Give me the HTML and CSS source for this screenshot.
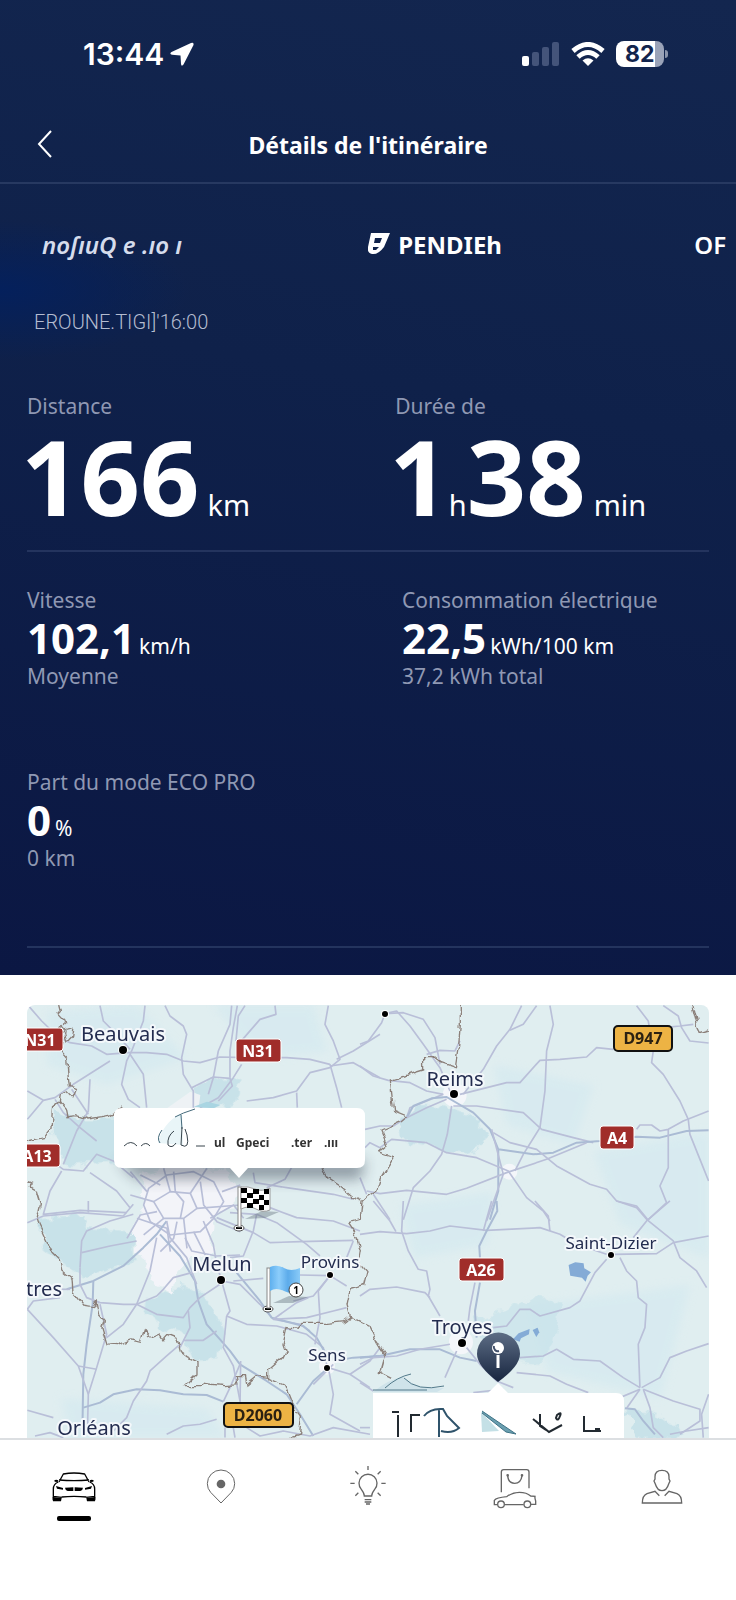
FILE: index.html
```
<!DOCTYPE html>
<html lang="fr">
<head>
  <meta charset="UTF-8">
  <meta name="viewport" content="width=device-width, initial-scale=1">
  <title>Détails de l'itinéraire</title>
  <link rel="stylesheet" href="styles.css">
</head>
<body>

<div class="trip">
  <div class="status">
    <div class="status-left">
      <span class="clock">13:44</span>
      <svg width="24" height="24" viewBox="0 0 24 24"><path d="M21 1 L1.500 10 Q-1 12 2 12.800 L10.500 13.600 L11 22 Q11.500 25 13.500 22.500 L23.500 3 Q24 0 21 1Z" fill="#fff"/></svg>
    </div>
    <div class="status-right">
      <svg width="38" height="24" viewBox="0 0 38 24" fill="#44547a">
        <rect x="0" y="14" width="7" height="10" rx="2" fill="#fff"/>
        <rect x="10" y="10" width="7" height="14" rx="2"/>
        <rect x="20" y="5" width="7" height="19" rx="2"/>
        <rect x="30" y="0" width="7" height="24" rx="2"/>
      </svg>
      <svg width="34" height="24" viewBox="0 0 34 24" fill="none" stroke="#fff" stroke-width="5">
        <path d="M2 9 Q17 -4 32 9"/>
        <path d="M7 15 Q17 6 27 15"/>
        <path d="M17 24 L11.500 18.500 Q17 14 22.500 18.500Z" fill="#fff" stroke="none"/>
      </svg>
      <div class="battery"><span>82</span></div>
    </div>
  </div>

  <header class="header">
    <button class="back" aria-label="Retour">
      <svg width="16" height="28" viewBox="0 0 16 28"><path d="M14 1 L2 14 L14 27" fill="none" stroke="#fff" stroke-width="2"/></svg>
    </button>
    <h1>Détails de l'itinéraire</h1>
  </header>

  <div class="legs">
    <span class="leg">noſıuQ e .ıo ı</span>
    <span class="leg leg-active">
      <svg width="22" height="22" viewBox="0 0 22 22"><path fill-rule="evenodd" fill="#fff" d="M3 0 H22 L16 14 Q10 22 4 21 Q-1 20 0 14Z M7 5 H14 L12 10 H6Z M5 14 H11 L8 17 H5Z"/></svg>
      PENDIEh
    </span>
    <span class="leg leg-next">OF</span>
  </div>
  <p class="date">EROUNE.TIGI]'16:00</p>

  <div class="stats stats-big">
    <div>
      <p class="label">Distance</p>
      <p class="big">166<small class="gap">km</small></p>
    </div>
    <div>
      <p class="label">Durée de</p>
      <p class="big">1<small>h</small>38<small class="gap">min</small></p>
    </div>
  </div>

  <div class="stats stats-small">
    <div>
      <p class="label">Vitesse</p>
      <p class="value">102,1<small>km/h</small></p>
      <p class="label">Moyenne</p>
    </div>
    <div>
      <p class="label">Consommation électrique</p>
      <p class="value">22,5<small>kWh/100 km</small></p>
      <p class="label">37,2 kWh total</p>
    </div>
    <div>
      <p class="label">Part du mode ECO PRO</p>
      <p class="value">0<small>%</small></p>
      <p class="label">0 km</p>
    </div>
  </div>
</div>

<main class="map-wrap">
  <svg class="map" viewBox="0 0 682 433" role="img" aria-label="Carte de l'itinéraire">
    <defs>
      <linearGradient id="pin" x1="0" y1="0" x2="0" y2="1">
        <stop offset="0" stop-color="#5d6d85"/><stop offset="1" stop-color="#17253f"/>
      </linearGradient>
      <linearGradient id="flag" x1="0" y1="0" x2="1" y2="0">
        <stop offset="0" stop-color="#5fb0ee"/><stop offset=".3" stop-color="#8ccdfb"/>
        <stop offset=".6" stop-color="#5cabea"/><stop offset="1" stop-color="#8acbf8"/>
      </linearGradient>
      <filter id="soft" x="-20%" y="-50%" width="140%" height="250%"><feGaussianBlur stdDeviation="7"/></filter>
      <filter id="wash" x="-20%" y="-20%" width="140%" height="140%"><feGaussianBlur stdDeviation="12"/></filter>
      <!-- rough edges for forests and department borders -->
      <filter id="rough" color-interpolation-filters="sRGB">
        <feTurbulence type="fractalNoise" baseFrequency=".025" numOctaves="3" seed="4"/>
        <feDisplacementMap in="SourceGraphic" scale="45" xChannelSelector="R" yChannelSelector="G"/>
      </filter>
      <filter id="jagged" color-interpolation-filters="sRGB">
        <feTurbulence type="fractalNoise" baseFrequency=".03" numOctaves="2" seed="9"/>
        <feDisplacementMap in="SourceGraphic" scale="24" xChannelSelector="R" yChannelSelector="G"/>
      </filter>
    </defs>
    <rect width="682" height="433" fill="#e0eef0"/>

    <g transform="scale(.3333)">
      <!-- pale washes -->
      <g fill="#d3e9f0" opacity=".6" filter="url(#wash)">
        <path d="M60 20 L330 0 L480 160 L240 240 L60 180Z"/>
        <path d="M560 0 L860 0 L900 140 L690 160Z"/>
        <path d="M1400 180 L1700 240 L1640 420 L1440 360Z"/>
        <path d="M1700 440 L2046 380 L2046 760 L1780 660Z"/>
        <path d="M1500 900 L1990 840 L1900 1180 L1560 1100Z"/>
        <path d="M100 1180 L540 1210 L600 1299 L130 1299Z"/>
        <path d="M1120 600 L1400 560 L1380 720 L1160 760Z"/>
      </g>
      <!-- forests -->
      <g fill="#c8e2e9" filter="url(#rough)">
        <path d="M80 300 L130 340 L270 340 L265 470 L110 480 L80 380Z"/>
        <path d="M500 245 L560 220 L630 222 L636 265 L620 308 L520 310Z"/>
        <path d="M1120 355 L1180 300 L1250 300 L1330 330 L1375 380 L1360 430 L1320 448 L1260 440 L1210 420 L1125 405Z"/>
        <path d="M35 640 L170 630 L190 670 L320 680 L325 770 L230 800 L170 820 L90 760 L50 730Z"/>
        <path d="M360 880 L460 840 L520 860 L560 920 L590 980 L570 1060 L500 1065 L470 990 L400 970 L350 930Z"/>
        <path d="M1350 935 L1460 910 L1520 880 L1600 890 L1580 1020 L1530 1080 L1420 1060 L1360 1000Z" opacity=".7"/>
        <path d="M1800 1220 L1870 1225 L1950 1260 L1970 1299 L1830 1299Z"/>
      </g>
      <!-- urban area -->
      <path d="M340 510 L450 480 L590 490 L640 580 L560 640 L555 740 L470 770 L430 860 L380 830 L350 760 L310 690 L350 620Z" fill="#f3f4f9" filter="url(#rough)"/>
      <path d="M420 310 L490 260 L520 270 L515 310Z" fill="#eef2f5"/>
      <g fill="#f4f6fa"><circle cx="1283" cy="270" r="36"/><circle cx="1447" cy="500" r="24"/><circle cx="1302" cy="1012" r="36"/><circle cx="900" cy="1085" r="24"/></g>

      <g class="roads">
        <!-- north-west -->
        <g transform="translate(-81 -42)">
          <path d="M85 44 L125 90 L175 138 L210 155 L275 165 L320 190 L385 185 L440 185 L500 190 L550 210 L600 215 L660 198 L740 200 L860 200 L930 205 L990 220"/>
          <path d="M300 44 L310 90 L350 130 L390 175"/>
          <path d="M435 44 L430 90 L395 180 L380 210 L365 280 L385 325 L420 350"/>
          <path d="M390 190 L430 250 L440 350"/>
          <path d="M495 44 L510 75 L550 105 L560 130 L545 200 L550 250 L580 300 L580 350"/>
          <path d="M695 44 L690 100 L655 180 L640 260 L625 310"/>
          <path d="M712 44 L700 110 L690 180 L690 260"/>
          <path d="M735 44 L715 75 L708 150"/>
          <path d="M825 44 L828 70 L780 85 L715 160"/>
          <path d="M725 220 L700 260 L655 320 L600 350"/>
          <path d="M575 290 L640 258 L690 262 L697 285 L655 330"/>
          <path d="M985 44 L975 100 L1000 150 L1020 205 L990 230 L930 245 L890 300 L820 320 L740 330"/>
          <path d="M990 220 L1010 290 L1025 350"/><path d="M990 225 L1060 215 L1140 260"/>
          <path d="M1010 205 L1060 180 L1140 130"/><path d="M890 305 L892 350"/>
          <path d="M82 300 L130 328 L165 320 L220 280 L330 210"/>
          <path d="M130 328 L95 370 L82 385"/><path d="M165 325 L190 365 L240 410 L290 450"/>
          <path d="M270 265 L265 360 L230 420 L190 520"/><path d="M215 295 L265 370"/>
          <path d="M82 490 L140 500 L190 535 L250 540 L290 490 L340 510 L400 560"/>
          <path d="M185 540 L150 600 L130 670 L240 658 L380 665"/>
          <path d="M270 545 L350 600 L390 650"/>
          <path d="M880 520 L855 565 L800 590"/><path d="M760 545 L765 575 L860 590 L1000 610 L1060 625"/>
        </g>
        <!-- capital ring -->
        <g stroke-width="5">
          <path d="M365 550 L420 510 L500 500 L560 530 L590 590 L560 640 L520 680 L430 690 L370 650 L350 600Z"/>
          <path d="M380 590 L430 560 L490 565 L510 610 L470 640 L410 640Z"/>
          <path d="M430 560 L410 490"/><path d="M490 565 L540 490"/><path d="M510 610 L640 600"/>
          <path d="M470 640 L480 730"/><path d="M410 640 L350 690"/><path d="M380 590 L310 570"/>
          <path d="M440 500 L445 560 L470 590 L460 640"/><path d="M400 540 L340 510"/>
          <path d="M520 530 L530 600 L570 650 L640 680"/><path d="M500 680 L540 760 L570 800"/>
          <path d="M330 640 L420 670 L430 740"/><path d="M585 560 L640 540"/>
          <path d="M450 650 L440 700 L400 740"/><path d="M550 640 L620 600 L650 640"/>
          <path d="M360 560 L310 500"/><path d="M390 620 L340 630 L300 700"/>
        </g>
        <!-- north-east -->
        <g transform="translate(999 -42)">
          <path d="M0 160 L25 150 L65 95 L75 68 L110 60 L150 105 L190 160 L240 230 L270 300"/>
          <path d="M75 68 L130 65 L190 85 L225 140 L240 220"/>
          <path d="M200 190 L240 178 L285 180 L300 150"/>
          <path d="M0 225 L40 255 L85 268 L150 275 L200 300 L250 310"/>
          <path d="M485 44 L450 115 L410 165 L370 235 L310 310"/><path d="M530 44 L490 100 L450 118"/>
          <path d="M570 44 L580 100 L560 180 L555 300 L540 410 L490 490 L465 540"/>
          <path d="M300 310 L360 295 L440 275 L480 275 L540 208 L600 205 L680 198 L710 170 L760 175"/>
          <path d="M830 44 L865 90 L880 180 L875 215 L910 250 L960 330 L985 385 L990 430 L1030 530 L1046 570"/>
          <path d="M910 44 L955 75 L965 110 L990 150 L1046 156"/><path d="M910 110 L960 105 L1000 100"/>
          <path d="M250 310 L150 350 L140 380"/><path d="M280 345 L350 345 L490 365 L545 415 L640 440 L700 455"/>
          <path class="main" d="M140 380 L160 345 L215 322 L260 318 L340 365 L390 415 L415 475 L520 490 L580 485 L650 455 L720 450 L830 437 L900 440 L980 420 L1046 418"/>
          <path class="main" d="M415 475 L415 600 L390 686"/>
          <path d="M275 345 L262 430 L245 490 L210 540 L160 590 L130 686"/>
          <path d="M15 470 L30 455 L60 470 L95 445 L200 455 L260 485 L350 500 L445 540 L500 620 L550 660 L570 690"/>
          <path d="M15 415 L60 405 L100 405 L140 380 L200 350 L260 325"/>
          <path d="M20 600 L60 608 L140 598 L260 610 L320 592 L440 545 L560 505 L680 455"/>
          <path d="M400 425 L450 455 L530 475 L590 525 L690 580 L740 595 L770 630 L830 645 L865 688"/>
          <path d="M395 415 L430 550 L380 690"/><path d="M830 415 L840 402 L875 402 L900 420 L925 415 L970 390 L1046 360"/>
          <path d="M925 415 L925 530 L900 585 L920 635 L865 686"/><path d="M40 610 L90 686"/><path d="M20 610 L0 560"/>
        </g>
        <!-- south-west -->
        <g transform="translate(-81 588)">
          <path d="M82 65 L130 45 L240 35 L370 45 L400 10"/>
          <path d="M265 0 L265 35"/><path d="M240 200 L245 120 L260 90 L330 60 L400 40"/>
          <path class="main" d="M200 265 L280 240 L370 195 L430 140 L470 100 L500 60"/>
          <path d="M180 265 L210 265"/><path d="M245 155 L330 135 L410 120"/>
          <path class="main" d="M480 100 L540 165 L585 240 L595 300 L620 370 L660 415 L690 450 L720 490 L800 540 L860 580 L900 640 L940 705"/>
          <path d="M500 60 L510 110 L560 170 L590 250"/><path d="M555 110 L575 150 L650 165 L720 162"/>
          <path d="M610 60 L640 130 L650 190 L665 240 L690 330 L680 345"/>
          <path d="M470 110 L450 210 L410 310 L370 370 L320 410"/>
          <path d="M280 240 L278 310 L260 430 L250 520 L247 700" class="main"/>
          <path d="M300 310 L320 400 L290 500 L265 580 L262 700"/>
          <path d="M240 200 L240 250 L260 290 L300 305 L370 310 L410 310 L470 340 L550 350 L570 320 L600 290 L660 250"/>
          <path d="M410 310 L470 285 L490 265 L520 230 L575 215"/>
          <path d="M82 325 L100 300 L180 290"/><path d="M82 325 L160 410 L235 495 L265 580"/><path d="M235 495 L290 505"/>
          <path class="main" d="M250 620 L300 605 L340 580 L410 565 L480 568 L550 580 L620 582 L670 602"/>
          <path d="M540 430 L500 465 L450 510 L440 540 L400 600 L380 650 L330 700"/>
          <path d="M680 345 L670 440 L700 495 L720 600"/><path d="M720 490 L690 560 L670 602"/>
          <path d="M565 330 L570 380 L540 440"/><path d="M550 418 L610 418 L650 390"/>
          <path d="M680 345 L740 370 L830 375 L920 400 L970 440 L980 490"/>
          <path d="M665 240 L720 250 L780 310 L820 355 L900 370 L930 390"/><path class="main" d="M710 215 L780 300 L815 350 L910 375 L950 410 L990 480"/>
          <path d="M700 240 L790 232"/><path d="M900 222 L990 224 L1040 255"/><path d="M880 300 L940 285 L990 224"/>
          <path d="M820 355 L890 305 L925 290"/><path d="M820 355 L920 350 L1000 330 L1040 320"/>
          <path d="M650 50 L760 95 L810 125 L900 122 L1060 118"/><path d="M770 40 L760 90 L730 165 L690 170"/>
          <path d="M690 35 L770 40 L830 65 L920 130 L960 165"/><path d="M810 20 L890 50 L1000 60 L1080 90"/>
          <path d="M1060 120 L1040 170"/><path d="M990 224 L955 270 L960 350 L945 430"/>
          <path class="main" d="M985 500 L940 540 L890 610"/><path d="M985 500 L1000 580 L990 640 L1080 690"/>
          <path d="M985 500 L1050 520 L1110 480 L1140 440"/><path class="main" d="M1000 480 L1060 470 L1140 465"/><path d="M1050 520 L1110 560"/>
          <path d="M82 628 L160 650"/><path d="M500 700 L550 675 L600 670 L650 655"/><path d="M675 680 L675 710"/><path d="M700 680 L705 710"/>
          <path d="M740 680 L780 705 L850 690 L930 705 L1000 680 L1110 700"/><path d="M105 705 L150 695 L190 710"/>
          <path d="M720 620 L722 480"/><path d="M1000 490 L940 550"/>
        </g>
        <!-- south-east -->
        <g transform="translate(999 588)">
          <path d="M40 0 L90 60 L108 92"/><path d="M0 100 L60 92 L140 98 L210 90 L270 75 L380 88 L540 80 L600 100 L650 130 L740 160"/>
          <path d="M130 0 L125 90 L145 150 L175 205 L200 210 L210 265 L205 285 L240 345"/>
          <path class="main" d="M410 0 L412 30 L380 90 L358 135 L360 170"/><path d="M395 0 L370 90"/>
          <path d="M345 245 L330 320 L325 360"/><path class="main" d="M360 245 L345 330 L350 410"/>
          <path d="M0 285 L30 265 L110 258 L195 275 L210 290"/>
          <path d="M525 0 L565 45 L570 90"/><path d="M770 0 L830 20 L860 55 L940 120 L960 170 L1010 210 L1040 260"/>
          <path d="M930 0 L860 60 L820 110"/><path d="M760 160 L890 158 L940 125 L1046 105"/>
          <path d="M740 175 L705 215 L660 300 L630 320 L540 345 L510 325 L480 325 L440 375 L400 380"/>
          <path d="M780 170 L800 210 L830 240 L835 290 L860 310 L855 380 L835 430 L840 560"/>
          <path class="main" d="M0 470 L60 465 L150 445 L240 445 L300 470 L350 480"/><path d="M0 490 L40 470 L110 465 L180 445 L270 430"/>
          <path d="M290 450 L255 530"/><path d="M320 440 L360 490 L410 540 L460 560"/>
          <path d="M470 515 L570 525 L620 550 L685 575"/><path d="M480 470 L550 465 L590 445 L640 475 L720 480 L790 530 L840 560"/>
          <path d="M845 560 L900 530 L930 470 L980 450 L1046 428"/><path d="M850 565 L940 600 L1020 625 L1020 660 L960 700"/>
          <path d="M840 565 L780 590"/><path d="M850 565 L870 620 L880 680 L910 710"/><path d="M1046 580 L1025 640 L1030 710"/>
          <path class="main" d="M795 622 L825 625 L850 660 L885 700"/><path d="M840 565 L800 622"/><path d="M930 700 L980 690 L1046 680"/>
          <path d="M0 545 L40 570"/><path d="M340 575 L430 565"/><path d="M0 680 L30 680"/>
        </g>
      </g>

      <g class="borders" filter="url(#jagged)">
        <path d="M95 0 L100 20 L92 28 L108 45 L110 55 L98 65 L112 80 L100 90 L112 110 L104 140 L122 160 L130 245 L145 250 L135 275 L122 262 L100 270 L97 290 L115 310 L120 335 L150 332 L180 342 L225 335 L250 330 L268 322 L290 305"/>
        <path d="M100 290 L80 305 L75 370 L52 400 L0 412"/>
        <path d="M0 530 L12 535 L10 550 L28 560 L40 600 L30 640 L36 660 L50 690 L75 745 L100 770 L104 795 L135 820 L138 860 L170 900 L200 905 L208 890 L215 930 L232 950 L225 970 L240 1020 L270 1022 L310 1005 L340 1012 L352 975 L372 1000 L395 990 L405 1005 L420 988 L450 1000 L460 1040 L480 1055 L510 1070 L510 1110 L475 1145 L520 1145 L530 1135 L590 1142 L630 1140 L625 1112 L655 1112 L660 1140 L690 1115 L725 1120 L725 1095 L765 1060 L775 1040 L768 1020 L780 965 L810 970 L825 955 L900 955 L950 950 L970 935 L960 900 L970 850 L1010 840 L1020 800 L995 770 L1000 740 L985 680 L965 650 L1000 640 L1005 590 L1020 575 L1050 555 L1060 520 L1100 455 L1055 440 L1080 420 L1062 375 L1120 350 L1137 335 L1100 320 L1090 225 L1190 195 L1190 155 L1220 155 L1240 170 L1285 185 L1295 120 L1300 60 L1300 0"/>
        <path d="M885 490 L900 520 L945 550 L980 580 L1000 590"/>
        <path d="M725 1120 L770 1140 L790 1190 L820 1230 L815 1290 L790 1299"/>
        <path d="M970 935 L1000 950 L1030 965 L1050 1010 L1075 1050 L1060 1105 L1090 1120"/>
        <path d="M1995 0 L2010 60 L2020 80 L2046 72"/><path d="M118 75 L138 70 L134 95 L122 110 L116 90Z"/>
      </g>
      <g fill="#84abd6">
        <path d="M1625 780 L1645 772 L1670 775 L1672 790 L1692 802 L1682 812 L1676 830 L1665 818 L1630 812Z"/>
        <path d="M1458 1003 L1475 985 L1508 972 L1506 988 L1482 1000 L1478 1010Z"/><path d="M1517 975 L1532 968 L1537 982 L1528 996Z"/>
      </g>
      <path d="M500 305 L540 290 L580 300 L560 310Z" fill="#a9d5e2"/>
    </g>

    <!-- finish callout -->
    <path d="M90 155 H338 L334 174 H110Z" fill="#2a3446" opacity=".45" filter="url(#soft)"/>
    <path d="M95 103 H330 Q338 103 338 111 V155 Q338 163 330 163 H221 L212 173 L203 163 H95 Q87 163 87 155 V111 Q87 103 95 103Z" fill="#fff"/>
    <path d="M131 138 Q136 118 153 109 L155 110 L156 140" fill="#e9f5f8"/>
    <path d="M133 138 Q129 133 135 125 M148 112 Q155 108 168 104 M154 110 L155 124" fill="none" stroke="#456a7b" stroke-width="1"/>
    <path d="M147 126 Q140 131 141 140 Q145 144 149 138 M155 122 L154 140 Q163 145 160 130 L158 124 M97 141 Q104 134 110 141 M114 141 Q119 136 123 141 M169 141 H178" fill="none" stroke="#39454d" stroke-width="1"/>
    <g class="scrap"><text x="187" y="142">ul</text><text x="209" y="142">Gpeci</text><text x="264" y="142">.ter</text><text x="297" y="142">.ııı</text></g>

    <!-- towns -->
    <g class="town">
      <text x="96" y="36">Beauvais</text><text x="428" y="81">Reims</text><text x="195" y="266">Melun</text>
      <text x="17" y="291">tres</text><text x="67" y="430">Orléans</text><text x="435" y="329">Troyes</text>
    </g>
    <g class="town town-small">
      <text x="303" y="263">Provins</text><text x="300" y="356">Sens</text><text x="584" y="244">Saint-Dizier</text>
    </g>
    <g class="dots">
      <circle cx="96" cy="45" r="4"/><circle cx="427" cy="89" r="4"/><circle cx="194" cy="275" r="4"/><circle cx="435" cy="338" r="4"/>
      <circle cx="303" cy="270" r="3"/><circle cx="300" cy="363" r="3"/><circle cx="584" cy="250" r="3"/><circle cx="358" cy="9" r="3"/>
    </g>

    <!-- road shields -->
    <g class="shield">
      <rect x="-9" y="23" width="45" height="23" rx="3"/><text x="13" y="41">N31</text>
      <rect x="209" y="34" width="45" height="23" rx="3"/><text x="231" y="52">N31</text>
      <rect x="-12" y="139" width="45" height="23" rx="3"/><text x="10" y="157">A13</text>
      <rect x="573" y="121" width="34" height="23" rx="3"/><text x="590" y="139">A4</text>
      <rect x="432" y="253" width="45" height="23" rx="3"/><text x="454" y="271">A26</text>
    </g>
    <g class="shield shield-d">
      <rect x="587" y="21" width="58" height="25" rx="4"/><text x="616" y="39">D947</text>
      <rect x="197" y="398" width="69" height="24" rx="4"/><text x="231" y="416">D2060</text>
    </g>

    <!-- chequered flag -->
    <g>
      <path d="M218 214 L235 206 L252 207 L238 213Z" fill="#4a5a66" opacity=".35"/>
      <ellipse cx="212" cy="223" rx="5" ry="3" fill="#fff" stroke="#555"/><path d="M209 223 H215" stroke="#000" stroke-width="2"/>
      <rect x="211" y="182" width="3" height="40" fill="#fff" stroke="#888" stroke-width="1"/>
      <path d="M214 182 Q221 181 228 184 T243 183 V205 Q236 208 229 204 T214 204Z" fill="#fff" stroke="#999" stroke-width="1"/>
      <path d="M214 183 h6 v5 h-6z M226 184 h6 v5 h-6z M237 184 h5 v5 h-5z M220 188 h6 v5 h-6z M232 190 h5 v5 h-5z M214 193 h6 v5 h-6z M226 194 h6 v5 h-6z M237 195 h5 v5 h-5z M220 198 h6 v5 h-6z M232 200 h5 v5 h-5z" fill="#000"/>
    </g>
    <!-- waypoint flag -->
    <g>
      <path d="M246 298 L262 291 L281 292 L266 298Z" fill="#4a5a66" opacity=".35"/>
      <ellipse cx="241" cy="304" rx="5" ry="3" fill="#fff" stroke="#555"/><path d="M238 304 H244" stroke="#000" stroke-width="2"/>
      <rect x="240" y="263" width="3" height="40" fill="#fff" stroke="#888" stroke-width="1"/>
      <path d="M243 262 Q250 259 257 263 T273 263 V286 Q265 290 257 286 T243 286Z" fill="url(#flag)"/>
      <circle cx="269" cy="285" r="7" fill="#fff" stroke="#444" stroke-width="1"/><text class="stop" x="269" y="289">1</text>
    </g>

    <!-- start callout and pin -->
    <path d="M346 387 Q362 374 376 372 Q390 385 417 383 L410 387 H346" fill="#cfe3ea"/>
    <path d="M358 383 Q370 372 384 369 M377 373 Q390 387 417 381 M346 385 H400" fill="none" stroke="#52798a" stroke-width="1"/>
    <path d="M346 388 H461 L471 378 L481 388 H589 Q597 388 597 396 V433 H346Z" fill="#fff"/>
    <path d="M471 377 Q450 361 450 349 A21 21 0 0 1 493 349 Q493 361 471 377Z" fill="url(#pin)"/>
    <circle cx="471" cy="343" r="6" fill="#fff"/><path d="M467 341 A4 4 0 0 0 472 346" fill="none" stroke="#42506a" stroke-width="2"/><path d="M471 350 V363" stroke="#fff" stroke-width="3"/>
    <g fill="none" stroke="#222a31" stroke-width="2">
      <path d="M365 407 H372 M371 410 V432 M384 427 V410 H393"/>
      <path d="M506 414 L522 427 L535 420 M513 409 V421 L519 425 M530 410 Q535 406 533 411 Q531 417 529 413Z"/>
      <path d="M557 411 V426 H574 M568 424 H573"/>
    </g>
    <g fill="none" stroke="#2f536b" stroke-width="2">
      <path d="M397 411 Q403 403 416 404 L420 411 L432 423 Q425 429 414 426 M412 404 V432"/>
    </g>
    <path d="M454 407 L472 426 L455 427Z" fill="#c4e0e6"/>
    <path d="M455 406 L489 429 L479 427 L455 408" fill="#6a9fb0" stroke="#3f7386" stroke-width="1"/>
  </svg>
</main>

<nav class="tabs">
  <a href="#" class="active" aria-label="Véhicule">
    <svg viewBox="149 95 144 144" fill="none" stroke="#000" stroke-width="4">
      <path d="M176 149 L189 125 Q221 119 253 125 L266 149 M176 143 Q221 147 266 143"/>
      <path d="M174 149 Q159 155 159 170 V204 M268 149 Q283 155 283 170 V204 M184 194 Q221 190 258 194 M159 192 L184 195 M283 192 L258 195"/>
      <path d="M162 144 Q167 140 174 144 L172 149 L163 148Z M280 144 Q275 140 268 144 L270 149 L279 148Z" fill="#000" stroke="none"/>
      <path d="M157 194 L184 197 L182 207 H158Z M285 194 L258 197 L260 207 H284Z" fill="#000" stroke="none"/>
      <path d="M167 161 L188 167 V172 L170 169Z M275 161 L254 167 V172 L272 169Z M194 166 L219 165 V176 H202 Q195 175 194 166Z M248 166 L223 165 V176 H240 Q247 175 248 166Z" fill="#000" stroke="none"/>
    </svg>
  </a>
  <a href="#" aria-label="Carte">
    <svg viewBox="590 95 144 144" fill="none" stroke="#666" stroke-width="3"><path d="M662 212 L631 180 Q621 169 621 154 A41 41 0 0 1 703 154 Q703 169 693 180Z"/><circle cx="662" cy="155" r="13" fill="#666" stroke="none"/></svg>
  </a>
  <a href="#" aria-label="Conseils">
    <svg viewBox="-72 95 144 144" fill="none" stroke="#666" stroke-width="4">
      <path d="M-11 191 Q-11 183 -20 171 A27 27 0 1 1 20 171 Q11 183 11 191Z M-10 202 H10 M-10 209 H10 M-6 215 H6"/>
      <path d="M0 101 V113 M-38 117 L-29 126 M38 117 L29 126 M-53 153 H-40 M53 153 H40 M-38 190 L-29 181 M38 190 L29 181"/>
    </svg>
  </a>
  <a href="#" aria-label="Boutique">
    <svg viewBox="370 95 144 144" fill="none" stroke="#666" stroke-width="4">
      <path d="M401 180 V119 Q401 112 408 112 H477 Q484 112 484 119 V168"/><path d="M420 130 Q422 153 441 153 Q460 153 463 130"/><circle cx="420" cy="129" r="2"/><circle cx="463" cy="129" r="2"/>
      <path d="M389 217 H380 V204 Q386 196 417 193 Q435 180 455 180 Q477 180 489 191 L502 192 Q501 198 504 206 V216 H490 M411 217 H468"/><circle cx="400" cy="216" r="10"/><circle cx="479" cy="216" r="10"/>
    </svg>
  </a>
  <a href="#" aria-label="Profil">
    <svg viewBox="811 95 144 144" fill="none" stroke="#666" stroke-width="4"><path d="M883 114 Q904 114 904 133 V140 L907 146 L903 155 Q897 175 883 175 Q869 175 863 155 L859 146 L862 140 V133 Q862 114 883 114Z"/><path d="M875 190 L862 177 L838 184 Q824 190 824 212 H942 Q942 190 928 184 L904 177 L891 190"/></svg>
  </a>
</nav>

</body>
</html>
```

FILE: styles.css
```
* {
  box-sizing: border-box;
}

body {
  margin: 0;
  min-height: 100vh;
  display: flex;
  flex-direction: column;
  background: #fff;
  font-family: "Noto Sans", "Open Sans", sans-serif;
  color: #fff;
}

p, h1 {
  margin: 0;
}

svg {
  display: block;
}

.trip {
  background:
    radial-gradient(ellipse 190px 70px at 0 290px, #04205c, transparent),
    linear-gradient(190deg, #13264f, #0f214a 40%, #0b1743);
  padding-bottom: 27px;
}

.status {
  display: flex;
  justify-content: space-between;
  align-items: center;
  height: 108px;
  padding: 0 72px 0 83px;
  font-family: Inter, sans-serif;
  font-weight: 600;
}

.status-left,
.status-right {
  display: flex;
  align-items: center;
}

.status-left {
  gap: 6px;
}

.status-right {
  gap: 11px;
}

.clock {
  font-size: 30px;
}

.battery {
  display: flex;
  align-items: center;
  position: relative;
  width: 48px;
  height: 26px;
  border-radius: 8px;
  background: linear-gradient(90deg, #fff 82%, #9aa3b8 82%);
  color: #12244d;
  font-size: 23px;
  font-weight: 700;
  line-height: 26px;
  padding-left: 9px;
}

.battery::after {
  content: "";
  position: absolute;
  right: -4px;
  top: 9px;
  width: 3px;
  height: 8px;
  border-radius: 0 3px 3px 0;
  background: #8a94ab;
}

.header {
  display: grid;
  grid-template-columns: 60px 1fr 60px;
  align-items: center;
  height: 76px;
  border-bottom: 2px solid #273961;
}

.header h1 {
  text-align: center;
  font-size: 23px;
  font-weight: 700;
}

.back {
  border: 0;
  background: none;
  padding: 0 0 2px 37px;
}

.legs {
  display: grid;
  grid-template-columns: 47% 47% 6%;
  align-items: center;
  height: 120px;
  padding-left: 42px;
  overflow: hidden;
  white-space: nowrap;
}

.leg {
  font-size: 24px;
  font-style: italic;
  font-weight: 600;
  color: #d5dcec;
}

.leg-active {
  display: flex;
  align-items: center;
  gap: 8px;
  font-style: normal;
  font-weight: 700;
  color: #fff;
}

.leg-next {
  font-style: normal;
  color: #fff;
}

.date {
  padding-left: 34px;
  font-family: Roboto, sans-serif;
  font-size: 20px;
  font-weight: 300;
  line-height: 36px;
  color: #b4bcd0;
}

.stats {
  display: grid;
  margin: 0 27px;
}

.stats-big {
  grid-template-columns: 54% 46%;
  padding: 50px 0 20px;
  border-bottom: 2px solid #24345e;
}

.stats-small {
  grid-template-columns: 55% 45%;
  row-gap: 74px;
  padding: 32px 0 72px;
  border-bottom: 2px solid #24345e;
}

.label {
  font-size: 21px;
  line-height: 32px;
  color: #8f98b3;
}

.big {
  margin-left: -6px;
  font-size: 104px;
  font-weight: 700;
  line-height: 108px;
  white-space: nowrap;
}

.big small {
  font-size: 29px;
  font-weight: 400;
  line-height: 1;
}

.big .gap {
  padding-left: 8px;
}

.value {
  font-size: 42px;
  font-weight: 700;
  line-height: 44px;
  white-space: nowrap;
}

.value small {
  padding-left: 4px;
  font-size: 21px;
  font-weight: 400;
  line-height: 1;
}

.map-wrap {
  flex: 1;
  padding: 30px 27px 0;
}

.map {
  width: 100%;
  height: auto;
  border-radius: 8px 8px 0 0;
}

.roads {
  fill: none;
  stroke: #b9bfd8;
  stroke-width: 5;
  stroke-linejoin: round;
}

.roads .main {
  stroke: #aabbd4;
  stroke-width: 6;
}

.borders {
  fill: none;
  stroke: #8b7f79;
  stroke-width: 4;
}

.town {
  font-size: 20px;
  text-anchor: middle;
  fill: #232c4f;
  stroke: #f4f8fb;
  stroke-width: 4px;
  stroke-linejoin: round;
  paint-order: stroke;
}

.town-small {
  font-size: 17px;
}

.dots {
  stroke: #fff;
  stroke-width: 2px;
  paint-order: stroke;
}

.shield {
  font-size: 16px;
  font-weight: 700;
  text-anchor: middle;
  fill: #fff;
}

.shield rect {
  fill: #a02d2a;
  stroke: #fff;
  stroke-width: 1px;
}

.shield-d {
  fill: #2b2112;
}

.shield-d rect {
  fill: #edb344;
  stroke: #111;
  stroke-width: 2px;
}

.scrap {
  font-size: 12px;
  font-weight: 700;
  fill: #333;
}

.stop {
  font-size: 10px;
  font-weight: 700;
  text-anchor: middle;
}

.tabs {
  display: grid;
  grid-template-columns: repeat(5, 1fr);
  border-top: 2px solid #dcdfe2;
  padding: 24px 0 80px;
  background: #fff;
}

.tabs a {
  display: flex;
  flex-direction: column;
  align-items: center;
}

.tabs svg {
  width: 48px;
  height: 48px;
}

.tabs .active::after {
  content: "";
  width: 34px;
  height: 5px;
  margin-top: 4px;
  border-radius: 2px;
  background: #000;
}
```
